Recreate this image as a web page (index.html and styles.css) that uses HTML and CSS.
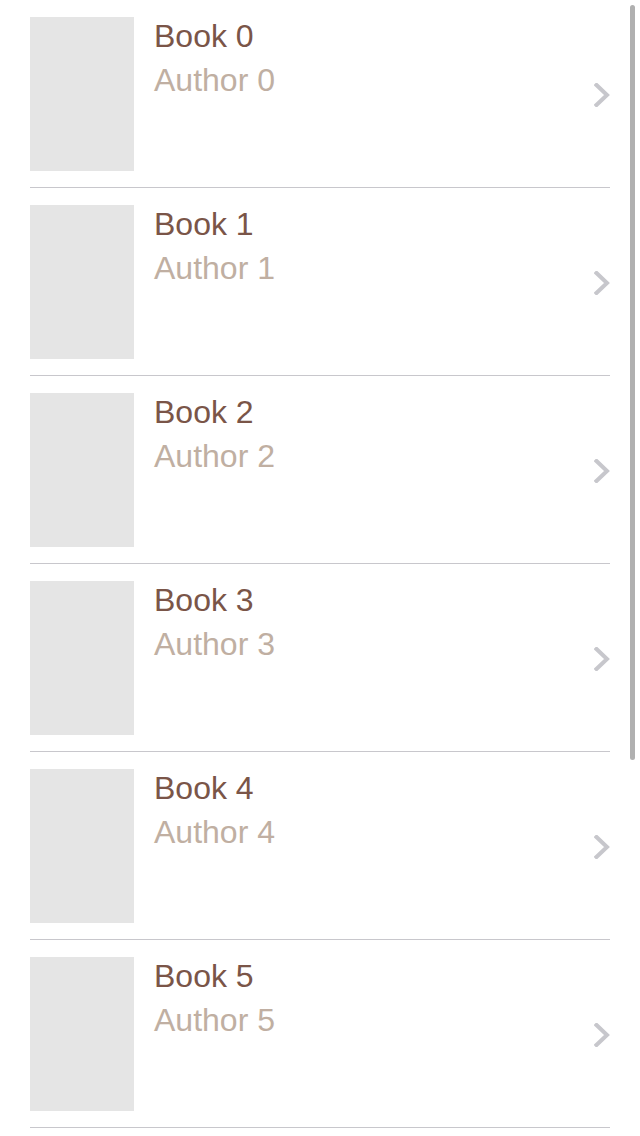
FILE: index.html
```html
<!DOCTYPE html>
<html>
<head>
<meta charset="utf-8">
<link rel="stylesheet" href="styles.css">
</head>
<body>
<ul class="list">
  <li class="row"><div class="cover"></div><div class="info"><div class="title">Book 0</div><div class="author">Author 0</div></div><svg class="chev" viewBox="0 0 16 24"><path d="M2.5 2 L13 12 L2.5 22" /></svg></li>
  <li class="row"><div class="cover"></div><div class="info"><div class="title">Book 1</div><div class="author">Author 1</div></div><svg class="chev" viewBox="0 0 16 24"><path d="M2.5 2 L13 12 L2.5 22" /></svg></li>
  <li class="row"><div class="cover"></div><div class="info"><div class="title">Book 2</div><div class="author">Author 2</div></div><svg class="chev" viewBox="0 0 16 24"><path d="M2.5 2 L13 12 L2.5 22" /></svg></li>
  <li class="row"><div class="cover"></div><div class="info"><div class="title">Book 3</div><div class="author">Author 3</div></div><svg class="chev" viewBox="0 0 16 24"><path d="M2.5 2 L13 12 L2.5 22" /></svg></li>
  <li class="row"><div class="cover"></div><div class="info"><div class="title">Book 4</div><div class="author">Author 4</div></div><svg class="chev" viewBox="0 0 16 24"><path d="M2.5 2 L13 12 L2.5 22" /></svg></li>
  <li class="row"><div class="cover"></div><div class="info"><div class="title">Book 5</div><div class="author">Author 5</div></div><svg class="chev" viewBox="0 0 16 24"><path d="M2.5 2 L13 12 L2.5 22" /></svg></li>
</ul>
<div class="scrollbar"></div>
</body>
</html>
```
FILE: styles.css
```css
html, body {
  margin: 0;
  padding: 0;
  height: 1136px;
  overflow: hidden;
  background: #ffffff;
}
body {
  font-family: "Liberation Sans", Arial, sans-serif;
}
.list {
  list-style: none;
  margin: 0;
  padding: 0 30px;
}
.row {
  display: flex;
  align-items: flex-start;
  padding: 17px 0 16px 0;
  border-bottom: 1px solid #c8c7cc;
}
.cover {
  width: 104px;
  height: 154px;
  background: #e5e5e5;
  flex: none;
}
.info {
  margin-left: 20px;
  flex: 1;
}
.title {
  font-size: 32px;
  line-height: 38px;
  color: #7a5548;
}
.author {
  font-size: 32px;
  line-height: 38px;
  margin-top: 6px;
  color: #c0afa2;
}
.chev {
  width: 16px;
  height: 24px;
  align-self: center;
  flex: none;
  margin-top: 2px;
}
.chev path {
  fill: none;
  stroke: #c7c7cc;
  stroke-width: 4;
  stroke-linecap: square;
  stroke-linejoin: miter;
}
.scrollbar {
  position: fixed;
  top: 5px;
  right: 5px;
  width: 5px;
  height: 755px;
  border-radius: 3px;
  background: #b0b0b0;
}
```
